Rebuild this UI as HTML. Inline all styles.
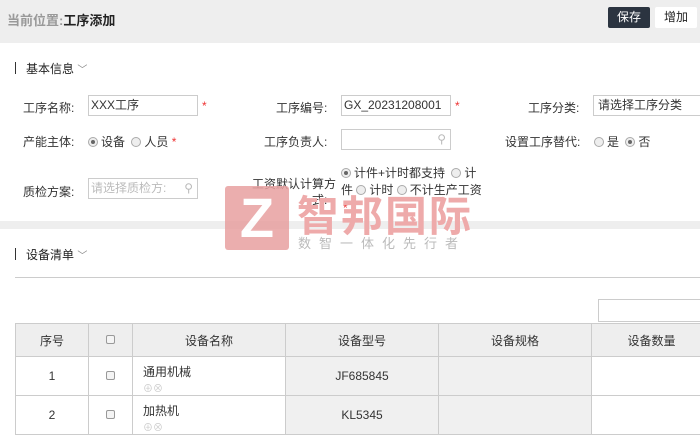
<!DOCTYPE html>
<html><head><meta charset="utf-8"><style>
*{margin:0;padding:0;box-sizing:border-box}
body{width:700px;height:438px;overflow:hidden;background:#fff;font-family:"Liberation Sans","Noto Sans CJK SC",sans-serif;font-size:12px;color:#333;position:relative}
.a{position:absolute;white-space:nowrap}
.hdr{left:0;top:0;width:700px;height:43px;background:#eee}
.btn{height:21px;line-height:21px;text-align:center;font-size:12px;border-radius:2px}
.inp{border:1px solid #ccc;height:21px;line-height:19px;padding-left:2px;background:#fff}
.r{display:inline-block;width:10px;height:10px;border:1px solid #aaa;border-radius:50%;background:#eee;vertical-align:-1px;margin-right:3px;position:relative}
.r.on:after{content:"";position:absolute;left:2px;top:2px;width:4px;height:4px;border-radius:50%;background:#666}
.st{color:#e33}
.cb{display:inline-block;width:9px;height:9px;border:1px solid #999;border-radius:2px;background:#f4f4f4}
table{position:absolute;left:15px;top:323px;border-collapse:collapse;table-layout:fixed;width:696px}
td,th{border:1px solid #ccc;text-align:center;font-weight:normal;color:#333;font-size:12px}
th{background:#eee;height:33px}
td{height:39px}
.g{background:#f0f0f0}
</style></head><body>
<div class="a hdr"></div>
<div class="a" style="left:7px;top:10px;font-size:13px;font-weight:bold;color:#999">当前位置:<span style="color:#222">工序添加</span></div>
<div class="a btn" style="left:608px;top:7px;width:42px;background:#2b3440;color:#fff">保存</div>
<div class="a btn" style="left:655px;top:7px;width:42px;background:#fff;color:#222">增加</div>

<div class="a" style="left:15px;top:62px;width:1px;height:12px;background:#333"></div>
<div class="a" style="left:26px;top:60px;font-size:12px;color:#222">基本信息 <span style="color:#888;font-size:10px">﹀</span></div>

<div class="a" style="left:23px;top:99px">工序名称:</div>
<div class="a inp" style="left:88px;top:95px;width:110px">XXX工序</div>
<div class="a st" style="left:202px;top:99px">*</div>
<div class="a" style="left:276px;top:99px">工序编号:</div>
<div class="a inp" style="left:341px;top:95px;width:110px">GX_20231208001</div>
<div class="a st" style="left:455px;top:99px">*</div>
<div class="a" style="left:528px;top:99px">工序分类:</div>
<div class="a inp" style="left:593px;top:95px;width:110px;padding-left:4px">请选择工序分类</div>

<div class="a" style="left:23px;top:133px">产能主体:</div>
<div class="a" style="left:88px;top:133px"><span class="r on"></span>设备 <span class="r" style="margin-left:3px"></span>人员 <span class="st">*</span></div>
<div class="a" style="left:264px;top:133px">工序负责人:</div>
<div class="a inp" style="left:341px;top:129px;width:110px"><span style="position:absolute;right:4px;top:0;color:#bbb">⚲</span></div>
<div class="a" style="left:505px;top:133px">设置工序替代:</div>
<div class="a" style="left:594px;top:133px"><span class="r"></span>是 <span class="r on" style="margin-left:3px"></span>否</div>

<div class="a" style="left:23px;top:183px">质检方案:</div>
<div class="a inp" style="left:88px;top:178px;width:110px;color:#bbb">请选择质检方:<span style="position:absolute;right:4px;top:0;color:#bbb">⚲</span></div>
<div class="a" style="left:252px;top:175px">工资默认计算方</div>
<div class="a" style="left:312px;top:191px">式:</div>
<div class="a st" style="left:343px;top:201px">*</div>
<div class="a" style="left:341px;top:164px"><span class="r on"></span>计件+计时都支持 <span class="r" style="margin-left:3px"></span>计</div>
<div class="a" style="left:341px;top:181px">件 <span class="r"></span>计时 <span class="r"></span>不计生产工资</div>

<div class="a" style="left:0;top:221px;width:700px;height:8px;background:#eee"></div>
<div class="a" style="left:225px;top:186px;width:64px;height:64px;background:#e8a0a0;opacity:.85;border-radius:3px;color:#fff;font-size:56px;font-weight:bold;text-align:center;line-height:64px">Z</div>
<div class="a" style="left:297px;top:183px;font-size:42px;font-weight:bold;color:#eeaaaa;letter-spacing:2px">智邦国际</div>
<div class="a" style="left:298px;top:233px;font-size:13px;color:#bbb;letter-spacing:8px">数智一体化先行者</div>

<div class="a" style="left:15px;top:248px;width:1px;height:12px;background:#333"></div>
<div class="a" style="left:26px;top:246px;color:#222">设备清单 <span style="color:#888;font-size:10px">﹀</span></div>
<div class="a" style="left:15px;top:277px;width:685px;height:1px;background:#ccc"></div>
<div class="a" style="left:598px;top:299px;width:110px;height:23px;border:1px solid #ccc"></div>

<table>
<colgroup><col style="width:73px"><col style="width:44px"><col style="width:153px"><col style="width:153px"><col style="width:153px"><col style="width:120px"></colgroup>
<tr><th>序号</th><th><span class="cb"></span></th><th>设备名称</th><th>设备型号</th><th>设备规格</th><th>设备数量</th></tr>
<tr><td>1</td><td><span class="cb"></span></td><td style="text-align:left;vertical-align:top;padding:6px 0 0 10px">通用机械<br><span style="color:#ccc;font-size:10px">⊕⊗</span></td><td class="g">JF685845</td><td class="g"></td><td></td></tr>
<tr><td>2</td><td><span class="cb"></span></td><td style="text-align:left;vertical-align:top;padding:6px 0 0 10px">加热机<br><span style="color:#ccc;font-size:10px">⊕⊗</span></td><td class="g">KL5345</td><td class="g"></td><td></td></tr>
</table>
</body></html>
